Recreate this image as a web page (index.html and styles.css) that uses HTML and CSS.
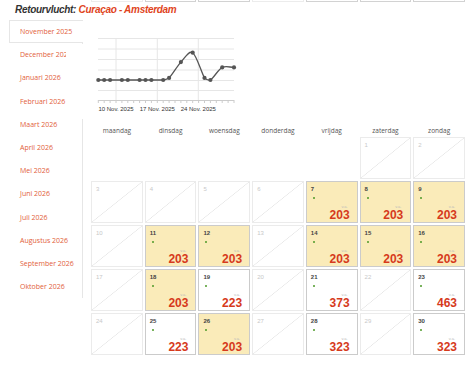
FILE: index.html
```html
<!DOCTYPE html>
<html lang="nl">
<head>
    <meta charset="UTF-8">
    <meta name="viewport" content="width=device-width, initial-scale=1.0">
    <title>Retourvlucht Curaçao - Amsterdam</title>
    <link rel="stylesheet" href="styles.css">
</head>
<body>
    <div class="prev-week">
        <div class="prev-cell prev-cell--off"></div>
        <div class="prev-cell"></div>
        <div class="prev-cell"></div>
        <div class="prev-cell prev-cell--off"></div>
        <div class="prev-cell"></div>
        <div class="prev-cell"></div>
        <div class="prev-cell"></div>
    </div>

    <h2 class="flight-title">Retourvlucht: <span class="route">Curaçao - Amsterdam</span></h2>

    <div class="layout">
        <ul class="months">
            <li class="month active">November 2025</li>
            <li class="month">December 2025</li>
            <li class="month">Januari 2026</li>
            <li class="month">Februari 2026</li>
            <li class="month">Maart 2026</li>
            <li class="month">April 2026</li>
            <li class="month">Mei 2026</li>
            <li class="month">Juni 2026</li>
            <li class="month">Juli 2026</li>
            <li class="month">Augustus 2026</li>
            <li class="month">September 2026</li>
            <li class="month">Oktober 2026</li>
        </ul>

        <div class="calendar">
            <div class="weekdays">
                <div>maandag</div>
                <div>dinsdag</div>
                <div>woensdag</div>
                <div>donderdag</div>
                <div>vrijdag</div>
                <div>zaterdag</div>
                <div>zondag</div>
            </div>
            <div class="weeks">
                <!-- week 1 -->
                <div class="day day--blank"></div>
                <div class="day day--blank"></div>
                <div class="day day--blank"></div>
                <div class="day day--blank"></div>
                <div class="day day--blank"></div>
                <div class="day day--off"><span class="num">1</span></div>
                <div class="day day--off"><span class="num">2</span></div>
                <!-- week 2 -->
                <div class="day day--off"><span class="num">3</span></div>
                <div class="day day--off"><span class="num">4</span></div>
                <div class="day day--off"><span class="num">5</span></div>
                <div class="day day--off"><span class="num">6</span></div>
                <div class="day day--best"><span class="num">7</span><span class="dot"></span><span class="from">v.a.</span><span class="price">203</span></div>
                <div class="day day--best"><span class="num">8</span><span class="dot"></span><span class="from">v.a.</span><span class="price">203</span></div>
                <div class="day day--best"><span class="num">9</span><span class="dot"></span><span class="from">v.a.</span><span class="price">203</span></div>
                <!-- week 3 -->
                <div class="day day--off"><span class="num">10</span></div>
                <div class="day day--best"><span class="num">11</span><span class="dot"></span><span class="from">v.a.</span><span class="price">203</span></div>
                <div class="day day--best"><span class="num">12</span><span class="dot"></span><span class="from">v.a.</span><span class="price">203</span></div>
                <div class="day day--off"><span class="num">13</span></div>
                <div class="day day--best"><span class="num">14</span><span class="dot"></span><span class="from">v.a.</span><span class="price">203</span></div>
                <div class="day day--best"><span class="num">15</span><span class="dot"></span><span class="from">v.a.</span><span class="price">203</span></div>
                <div class="day day--best"><span class="num">16</span><span class="dot"></span><span class="from">v.a.</span><span class="price">203</span></div>
                <!-- week 4 -->
                <div class="day day--off"><span class="num">17</span></div>
                <div class="day day--best"><span class="num">18</span><span class="dot"></span><span class="from">v.a.</span><span class="price">203</span></div>
                <div class="day"><span class="num">19</span><span class="dot"></span><span class="from">v.a.</span><span class="price">223</span></div>
                <div class="day day--off"><span class="num">20</span></div>
                <div class="day"><span class="num">21</span><span class="dot"></span><span class="from">v.a.</span><span class="price">373</span></div>
                <div class="day day--off"><span class="num">22</span></div>
                <div class="day"><span class="num">23</span><span class="dot"></span><span class="from">v.a.</span><span class="price">463</span></div>
                <!-- week 5 -->
                <div class="day day--off"><span class="num">24</span></div>
                <div class="day"><span class="num">25</span><span class="dot"></span><span class="from">v.a.</span><span class="price">223</span></div>
                <div class="day day--best"><span class="num">26</span><span class="dot"></span><span class="from">v.a.</span><span class="price">203</span></div>
                <div class="day day--off"><span class="num">27</span></div>
                <div class="day"><span class="num">28</span><span class="dot"></span><span class="from">v.a.</span><span class="price">323</span></div>
                <div class="day day--off"><span class="num">29</span></div>
                <div class="day"><span class="num">30</span><span class="dot"></span><span class="from">v.a.</span><span class="price">323</span></div>
            </div>
        </div>
    </div>

    <!-- price trend popup, drawn over the month list -->
    <div class="price-chart">
        <svg width="176" height="83" viewBox="66 36 176 83">
            <g class="grid">
                <line x1="98" y1="38.5" x2="234" y2="38.5"/>
                <line x1="98" y1="49" x2="234" y2="49"/>
                <line x1="98" y1="59.5" x2="234" y2="59.5"/>
                <line x1="98" y1="70" x2="234" y2="70"/>
                <line x1="98" y1="80.5" x2="234" y2="80.5"/>
                <line x1="98" y1="90.5" x2="234" y2="90.5"/>
                <line x1="116" y1="38.5" x2="116" y2="100.5"/>
                <line x1="157.3" y1="38.5" x2="157.3" y2="100.5"/>
                <line x1="198.3" y1="38.5" x2="198.3" y2="100.5"/>
            </g>
            <g class="axis">
                <line x1="98" y1="100.5" x2="234" y2="100.5"/>
                <path d="M98.3 100v3M104.2 100v3M110.1 100v3M116 100v3M121.9 100v3M127.8 100v3M133.7 100v3M139.6 100v3M145.5 100v3M151.4 100v3M157.3 100v3M163.2 100v3M169.1 100v3M175 100v3M180.9 100v3M186.8 100v3M192.7 100v3M198.6 100v3M204.5 100v3M210.4 100v3M216.3 100v3M222.2 100v3M228.1 100v3M234 100v3"/>
            </g>
            <g class="labels">
                <text x="116" y="110.5">10 Nov. 2025</text>
                <text x="157.3" y="110.5">17 Nov. 2025</text>
                <text x="198.3" y="110.5">24 Nov. 2025</text>
            </g>
            <path class="trend" d="M98.3 80 L163.2 80 C166.2 79.6 166.2 79.5 169.1 77.9 C172.1 74.8 177 66.4 180.9 62.1 C184.8 58 188.8 50.1 192.7 52.7 C196.6 55.3 201.6 73.2 204.5 77.9 C206.5 80 208.5 80.5 210.4 80 C213.4 78.3 218.3 69.4 222.2 67.4 C226.1 65.6 230 67.4 234 67.4"/>
            <g class="points">
                <circle cx="98.3" cy="80" r="2.1"/>
                <circle cx="104.2" cy="80" r="2.1"/>
                <circle cx="110.1" cy="80" r="2.1"/>
                <circle cx="121.9" cy="80" r="2.1"/>
                <circle cx="127.8" cy="80" r="2.1"/>
                <circle cx="139.6" cy="80" r="2.1"/>
                <circle cx="145.5" cy="80" r="2.1"/>
                <circle cx="151.4" cy="80" r="2.1"/>
                <circle cx="163.2" cy="80" r="2.1"/>
                <circle cx="169.1" cy="77.9" r="2.1"/>
                <circle cx="180.9" cy="62.1" r="2.1"/>
                <circle cx="192.7" cy="52.7" r="2.1"/>
                <circle cx="204.5" cy="77.9" r="2.1"/>
                <circle cx="210.4" cy="80" r="2.1"/>
                <circle cx="222.2" cy="67.4" r="2.1"/>
                <circle cx="234" cy="67.4" r="2.1"/>
            </g>
        </svg>
    </div>
</body>
</html>
```

FILE: styles.css
```css
body {
    margin: 0;
    background: #fff;
    font-family: 'Open Sans', 'Liberation Sans', sans-serif;
    position: relative;
    overflow: hidden;
}

/* bottom edge of the outbound calendar, scrolled up */
.prev-week {
    display: grid;
    grid-template-columns: repeat(7, 1fr);
    gap: 2px;
    width: 374px;
    height: 2px;
    margin-left: 91px;
}
.prev-cell {
    border: 1px solid #d2d2d2;
    border-top: none;
}
.prev-cell--off {
    border-color: #ececec;
}

.flight-title {
    margin: 2px 0 0 15px;
    font: italic bold 10px/12px 'Liberation Sans', Arial, sans-serif;
    letter-spacing: -0.3px;
    color: #333;
}
.route {
    color: #e0441c;
}

.layout {
    display: flex;
    margin-top: 4px;
}

/* month list */
.months {
    list-style: none;
    margin: 0 0 0 9px;
    padding: 0;
    width: 73px;
    border-right: 1px solid #e6e6e6;
    align-self: flex-start;
}
.month {
    box-sizing: border-box;
    height: 23.2px;
    display: flex;
    align-items: center;
    padding-left: 11px;
    font-size: 7px;
    color: #e2603a;
    white-space: nowrap;
    overflow: hidden;
}
.month.active {
    border: 1px solid #e6e6e6;
    border-right: none;
    margin-right: -1px;
    padding-left: 10px;
    background: #fff;
}

/* calendar */
.calendar {
    width: 374px;
    margin: 103px 0 0 8px;
}
.weekdays {
    display: grid;
    grid-template-columns: repeat(7, 1fr);
    gap: 2px;
    height: 14px;
    align-items: center;
    text-align: center;
    font-size: 6.5px;
    color: #555;
}
.weeks {
    display: grid;
    grid-template-columns: repeat(7, 1fr);
    grid-auto-rows: 42px;
    gap: 2px;
}
.day {
    display: flex;
    flex-direction: column;
    padding: 3px 7px 1px 4px;
    border: 1px solid #cbcbcb;
    background: #fff;
    font-family: 'Liberation Sans', Arial, sans-serif;
}
.day--blank {
    border: none;
}
.day--off {
    border-color: #ebebeb;
    background: linear-gradient(to bottom right, transparent calc(50% - 0.6px), #e6e6e6 50%, transparent calc(50% + 0.6px));
}
.day--best {
    background: #faebb9;
}
.num {
    font-size: 6px;
    line-height: 8px;
    font-weight: bold;
    color: #444;
}
.day--off .num {
    font-weight: normal;
    color: #c8c8c8;
}
.dot {
    width: 2px;
    height: 2px;
    margin: 4px 0 0 2px;
    border-radius: 50%;
    background: #4e9a28;
}
.from {
    margin-top: auto;
    margin-right: 2px;
    align-self: flex-end;
    font-size: 4px;
    line-height: 4px;
    color: #bbb;
}
.price {
    align-self: flex-end;
    font-size: 12px;
    line-height: 12px;
    font-weight: bold;
    color: #d63a1c;
}

/* price trend popup */
.price-chart {
    position: absolute;
    left: 66px;
    top: 36px;
    width: 176px;
    height: 83px;
    background: linear-gradient(transparent 8px, #fff 8px);
}
.price-chart svg {
    display: block;
}
.grid line {
    stroke: #e6e6e6;
    stroke-width: 1;
}
.axis line,
.axis path {
    stroke: #ccc;
    stroke-width: 1;
}
.labels text {
    font-family: 'Liberation Sans', Arial, sans-serif;
    font-size: 6px;
    fill: #333;
    text-anchor: middle;
}
.trend {
    fill: none;
    stroke: #555;
    stroke-width: 1.3;
}
.points circle {
    fill: #555;
}
```
